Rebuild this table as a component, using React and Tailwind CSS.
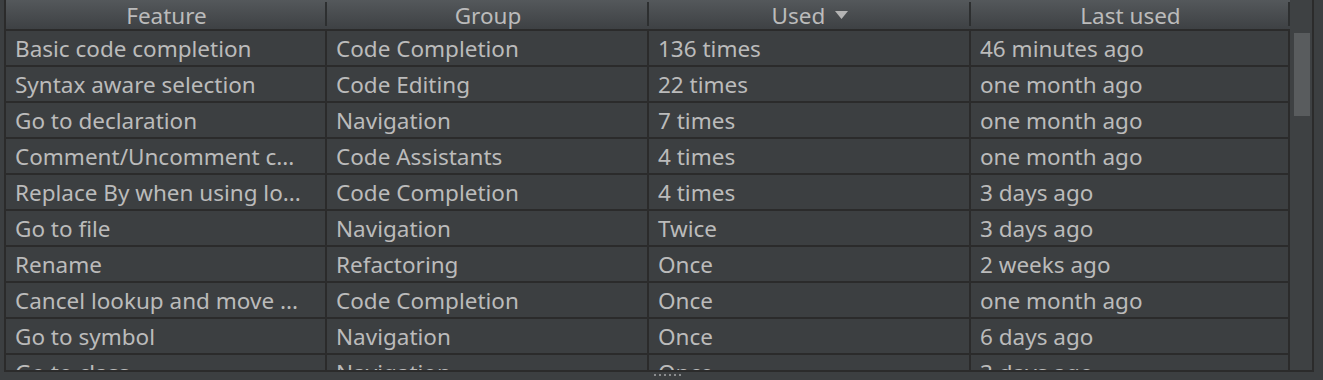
const rows = [
  ["Basic code completion", "Code Completion", "136 times", "46 minutes ago"],
  ["Syntax aware selection", "Code Editing", "22 times", "one month ago"],
  ["Go to declaration", "Navigation", "7 times", "one month ago"],
  ["Comment/Uncomment c...", "Code Assistants", "4 times", "one month ago"],
  ["Replace By when using lo...", "Code Completion", "4 times", "3 days ago"],
  ["Go to file", "Navigation", "Twice", "3 days ago"],
  ["Rename", "Refactoring", "Once", "2 weeks ago"],
  ["Cancel lookup and move ...", "Code Completion", "Once", "one month ago"],
  ["Go to symbol", "Navigation", "Once", "6 days ago"],
  ["Go to class", "Navigation", "Once", "3 days ago"],
];

const columns = [
  { label: "Feature", width: "w-[321px]" },
  { label: "Group", width: "w-[322px]" },
  { label: "Used", width: "w-[322px]", sorted: true },
  { label: "Last used", width: "w-[319px]" },
];

function HeaderCell({ label, width, sorted }) {
  return (
    <div className={`relative flex h-full ${width} shrink-0 items-center justify-center pt-[4px]`}>
      <span>{label}</span>
      {sorted && (
        <svg className="ml-[10px] mt-[-4px]" width="13" height="8" viewBox="0 0 13 8">
          <path d="M0 0 L13 0 L6.5 8 Z" fill="#b4b4b4" />
        </svg>
      )}
      <div className="absolute right-0 top-[2px] h-[24px] w-[2px] bg-[#2d2f30]" />
    </div>
  );
}

export default function App() {
  return (
    <div
      className="h-[380px] w-[1323px] overflow-hidden bg-[#3c3f41] text-[22.5px] text-[#bbbbbb]"
      style={{ fontFamily: '"Noto Sans", "Open Sans", sans-serif' }}
    >
      <div className="ml-[4px] flex h-[372px] w-[1310px] border-b-2 border-l-2 border-r-2 border-[#2b2b2b]">
        {/* table */}
        <div className="flex w-[1284px] flex-col overflow-hidden">
          <div className="flex h-[31px] shrink-0 border-b-2 border-[#2b2b2b] bg-gradient-to-b from-[#54585b] to-[#3e4144] leading-none">
            {columns.map((c) => (
              <HeaderCell key={c.label} {...c} />
            ))}
          </div>
          {rows.map((r, i) => (
            <div key={i} className="flex h-[36px] shrink-0 border-b-2 border-[#2b2b2b] bg-[#3c3f41]">
              {r.map((cell, j) => (
                <div
                  key={j}
                  className={`flex ${columns[j].width} shrink-0 items-center whitespace-nowrap border-r-2 border-[#2b2b2b] pl-[9px] pt-[3px] leading-none`}
                >
                  {cell}
                </div>
              ))}
            </div>
          ))}
        </div>
        {/* vertical scrollbar */}
        <div className="w-[22px] bg-[#3e4143] pl-[4px] pt-[33px]">
          <div className="h-[83px] w-[16px] bg-[#595c5e]" />
        </div>
      </div>
      {/* resize grip */}
      <div className="flex justify-center gap-[3px] pl-[12px] pt-[2px]">
        {[0, 1, 2, 3, 4, 5].map((d) => (
          <div key={d} className="h-[2px] w-[2px] bg-[#8a8c8e]" />
        ))}
      </div>
    </div>
  );
}
